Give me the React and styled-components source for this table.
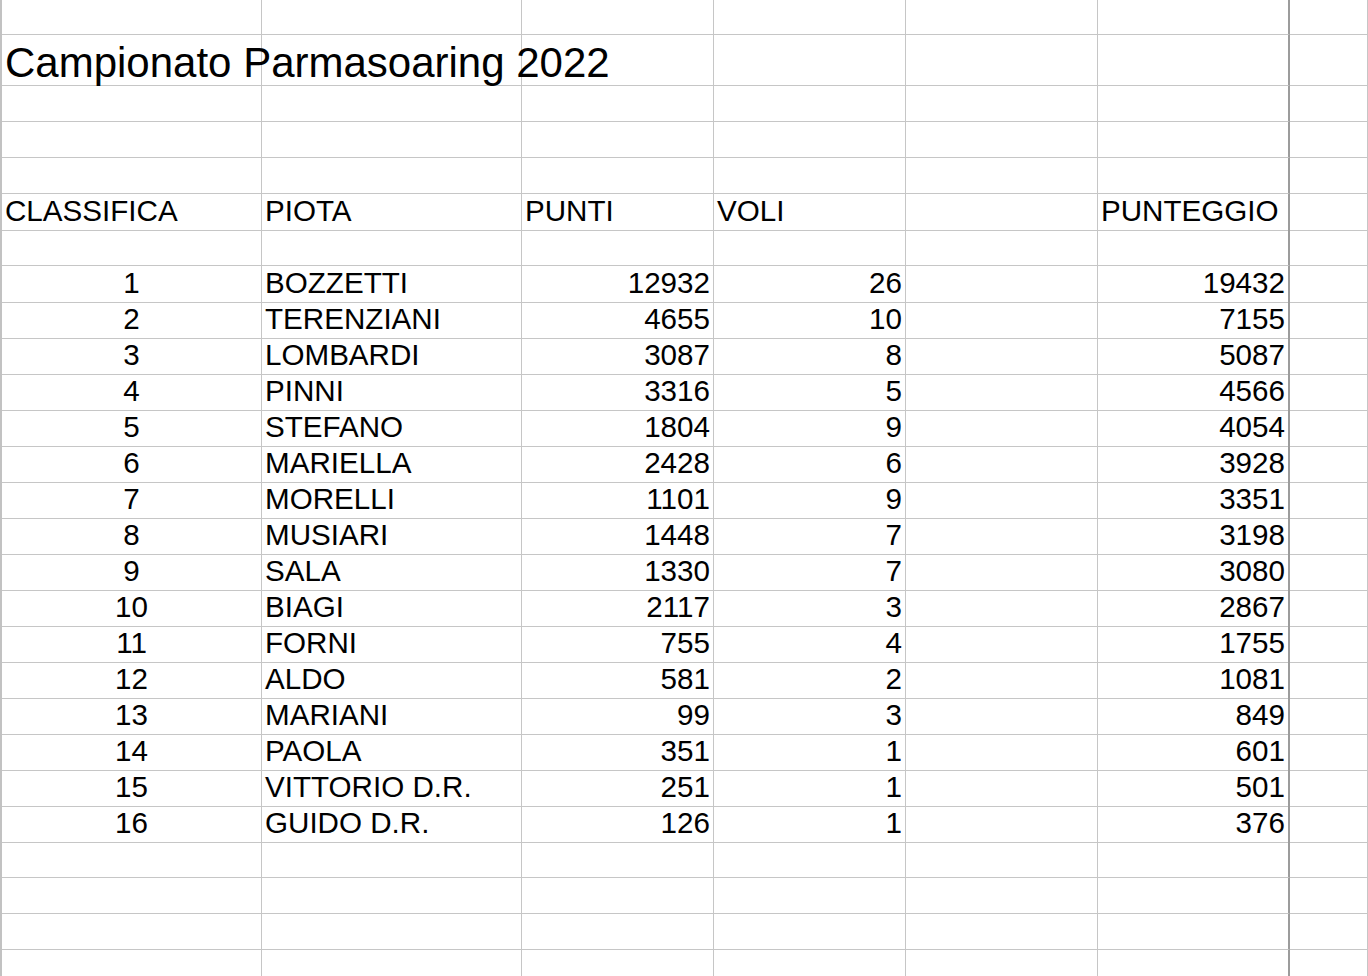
import React from 'react';
import styled, { createGlobalStyle } from 'styled-components';

const GlobalStyle = createGlobalStyle`
  html, body { margin: 0; padding: 0; background: #ffffff; overflow: hidden; }
  body { font-family: 'Liberation Sans', Arial, sans-serif; color: #000; }
`;

const Sheet = styled.div`
  width: 1368px;
  height: 976px;
  overflow: hidden;
  border-left: 2px solid #c2c2c2;
  box-sizing: border-box;
  background: #fff;
`;

const Row = styled.div`
  display: grid;
  grid-template-columns: 260px 260px 192px 192px 192px 192px 1fr;
  height: ${(p) => p.$h || 36}px;
`;

const Cell = styled.div`
  box-sizing: border-box;
  border-right: ${(p) => (p.$edge ? '2px solid #9c9c9c' : '1px solid #c6c6c6')};
  border-bottom: 1px solid #c6c6c6;
  display: flex;
  align-items: flex-end;
  justify-content: ${(p) => (p.$align === 'right' ? 'flex-end' : p.$align === 'center' ? 'center' : 'flex-start')};
  padding: 0 3px 2px 3px;
  font-size: 29.6px;
  line-height: 1.15;
  white-space: nowrap;
  overflow: visible;
  min-width: 0;
`;

const Title = styled.span`
  font-size: 42px;
  line-height: 1.15;
  margin-bottom: -4px;
  position: relative;
  z-index: 1;
`;

const data = [
  [1, 'BOZZETTI', 12932, 26, 19432],
  [2, 'TERENZIANI', 4655, 10, 7155],
  [3, 'LOMBARDI', 3087, 8, 5087],
  [4, 'PINNI', 3316, 5, 4566],
  [5, 'STEFANO', 1804, 9, 4054],
  [6, 'MARIELLA', 2428, 6, 3928],
  [7, 'MORELLI', 1101, 9, 3351],
  [8, 'MUSIARI', 1448, 7, 3198],
  [9, 'SALA', 1330, 7, 3080],
  [10, 'BIAGI', 2117, 3, 2867],
  [11, 'FORNI', 755, 4, 1755],
  [12, 'ALDO', 581, 2, 1081],
  [13, 'MARIANI', 99, 3, 849],
  [14, 'PAOLA', 351, 1, 601],
  [15, 'VITTORIO D.R.', 251, 1, 501],
  [16, 'GUIDO D.R.', 126, 1, 376],
];

function EmptyRow({ h }) {
  return (
    <Row $h={h}>
      <Cell />
      <Cell />
      <Cell />
      <Cell />
      <Cell />
      <Cell $edge />
      <Cell />
    </Row>
  );
}

export default function App() {
  return (
    <>
      <GlobalStyle />
      <Sheet>
        <EmptyRow h={35} />
        <Row $h={51}>
          <Cell>
            <Title>Campionato Parmasoaring 2022</Title>
          </Cell>
          <Cell />
          <Cell />
          <Cell />
          <Cell />
          <Cell $edge />
          <Cell />
        </Row>
        <EmptyRow />
        <EmptyRow />
        <EmptyRow />
        <Row>
          <Cell>CLASSIFICA</Cell>
          <Cell>PIOTA</Cell>
          <Cell>PUNTI</Cell>
          <Cell>VOLI</Cell>
          <Cell />
          <Cell $edge>PUNTEGGIO</Cell>
          <Cell />
        </Row>
        <EmptyRow />
        {data.map(([pos, name, punti, voli, tot]) => (
          <Row key={pos}>
            <Cell $align="center">{pos}</Cell>
            <Cell>{name}</Cell>
            <Cell $align="right">{punti}</Cell>
            <Cell $align="right">{voli}</Cell>
            <Cell />
            <Cell $edge $align="right">{tot}</Cell>
            <Cell />
          </Row>
        ))}
        <EmptyRow />
        <EmptyRow />
        <EmptyRow />
        <EmptyRow />
      </Sheet>
    </>
  );
}
